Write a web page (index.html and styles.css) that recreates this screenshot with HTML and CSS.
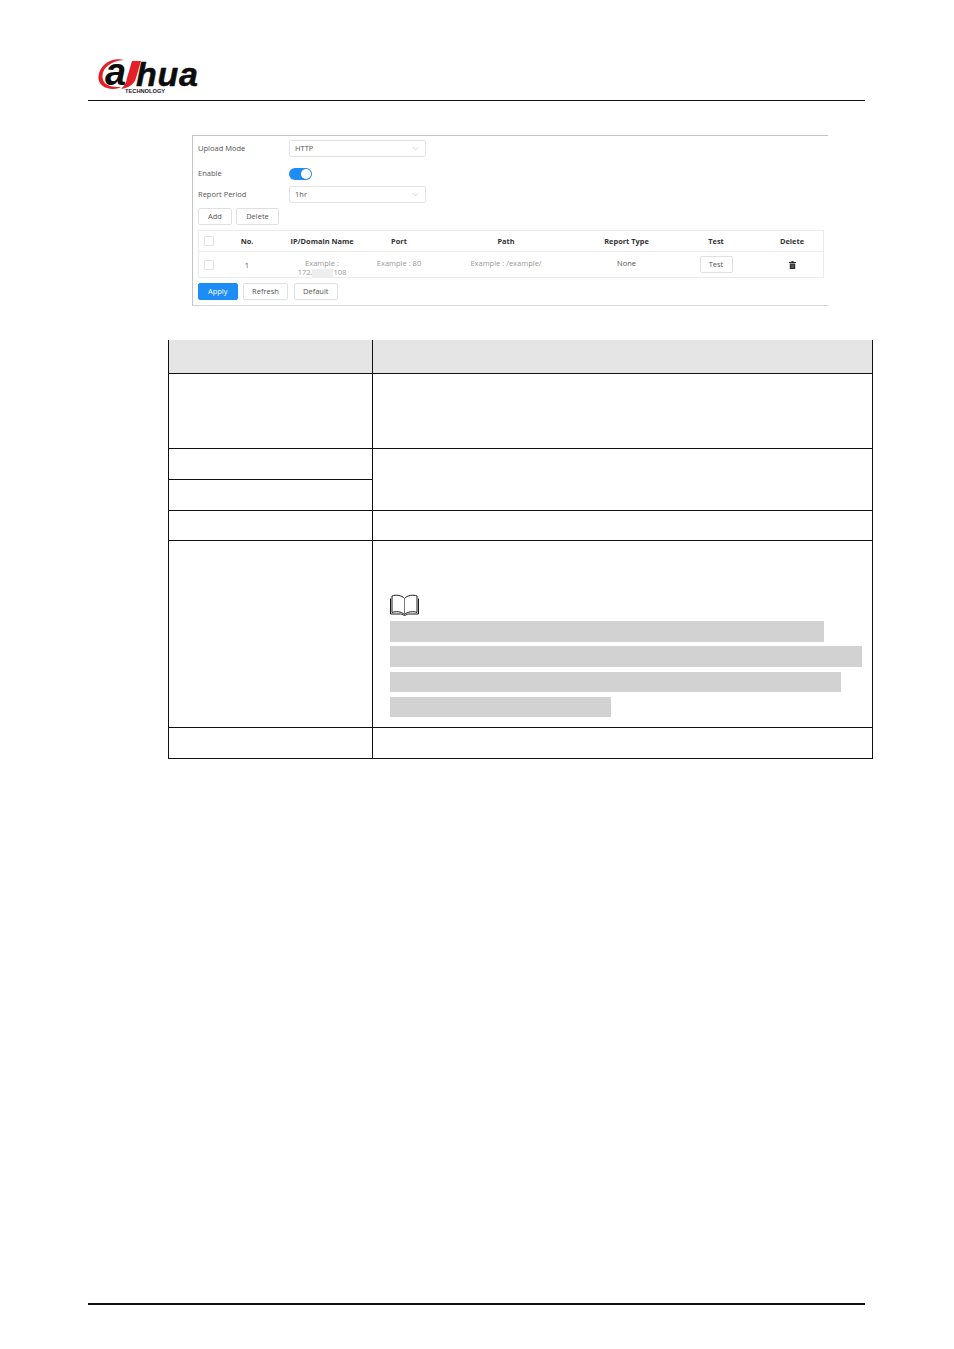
FILE: index.html
```html
<!DOCTYPE html>
<html lang="en">
<head>
<meta charset="utf-8">
<title>Upload</title>
<link rel="stylesheet" href="styles.css">
</head>
<body>
<div class="page">
  <header class="head">
    <div class="logo">
      <svg class="logo-mark" width="62" height="38" viewBox="0 0 62 38">
        <path d="M27 2C14-1 3 7 1.500 18 .5 26 7 31 16 31c3 0 6-1 8-2-6 0-18 0-18.500-10C5 9 15 3 27 2Z" fill="#e3202a"/>
        <path d="M35 3h9l-5 17c-2 7-8 10-15 11 3-3 5-5 6-11Z" fill="#e3202a"/>
      </svg>
      <span class="logo-a">a</span>
      <span class="logo-hua">hua</span>
      <span class="logo-sub">TECHNOLOGY</span>
    </div>
  </header>

  <section class="shot">
    <div class="form-row row-mode">
      <span class="label">Upload Mode</span>
      <div class="select"><span class="sel-text">HTTP</span><svg class="chev" width="7" height="5" viewBox="0 0 8 5"><path d="M1 1l3 3 3-3" fill="none" stroke="#c4c8cc" stroke-width=".8"/></svg></div>
    </div>
    <div class="form-row row-enable">
      <span class="label">Enable</span>
      <div class="switch"><span class="knob"></span></div>
    </div>
    <div class="form-row row-period">
      <span class="label">Report Period</span>
      <div class="select"><span class="sel-text">1hr</span><svg class="chev" width="7" height="5" viewBox="0 0 8 5"><path d="M1 1l3 3 3-3" fill="none" stroke="#c4c8cc" stroke-width=".8"/></svg></div>
    </div>
    <div class="btns top-btns">
      <span class="btn b-add">Add</span>
      <span class="btn b-del">Delete</span>
    </div>
    <div class="grid">
      <div class="grid-row grid-head">
        <div class="c c-check"><span class="box"></span></div>
        <div class="c c-no">No.</div>
        <div class="c c-ip">IP/Domain Name</div>
        <div class="c c-port">Port</div>
        <div class="c c-path">Path</div>
        <div class="c c-type">Report Type</div>
        <div class="c c-test">Test</div>
        <div class="c c-delete">Delete</div>
      </div>
      <div class="grid-row grid-body">
        <div class="c c-check"><span class="box"></span></div>
        <div class="c c-no dark">1</div>
        <div class="c c-ip ph ip-stack"><span>Example :</span><span class="ip-line">172.<i class="blur"></i>108</span></div>
        <div class="c c-port ph raised">Example : 80</div>
        <div class="c c-path ph raised">Example : /example/</div>
        <div class="c c-type dark raised">None</div>
        <div class="c c-test"><span class="btn b-test">Test</span></div>
        <div class="c c-delete">
          <svg width="7" height="8" viewBox="0 0 7 8"><path d="M2.500 0h2v1H7v1H0V1h2.500ZM.8 2.600h5.400V8H.8Z" fill="#2b2b2b"/><path d="M2.300 3.500v3.500M3.500 3.500v3.500M4.700 3.500v3.500" stroke="#999" stroke-width=".4"/></svg>
        </div>
      </div>
    </div>
    <div class="btns bottom-btns">
      <span class="btn b-apply">Apply</span>
      <span class="btn b-refresh">Refresh</span>
      <span class="btn b-default">Default</span>
    </div>
  </section>

  <table class="params">
    <colgroup><col class="col-a"><col class="col-b"></colgroup>
    <tr class="r-head"><th></th><th></th></tr>
    <tr class="r1"><td></td><td></td></tr>
    <tr class="r2"><td></td><td rowspan="2"></td></tr>
    <tr class="r3"><td></td></tr>
    <tr class="r4"><td></td><td></td></tr>
    <tr class="r5">
      <td></td>
      <td class="note-cell">
        <svg class="book" width="29" height="23" viewBox="0.5 1 29 23">
          <path d="M15 5.500C12 2 6 1.500 2.500 3v16.500C6 18 12 18.500 15 21.500c3-3 9-3.500 12.500-2V3C24 1.500 18 2 15 5.500Z" fill="#fff" stroke="#1a1a1a" stroke-width="1"/>
          <path d="M15 5.500v16" stroke="#777" stroke-width="1"/>
          <path d="M1 5.500v15.500h10c2 0 3 1.500 4 1.500s2-1.500 4-1.500h10V5.500" fill="none" stroke="#1a1a1a" stroke-width="1"/>
        </svg>
        <div class="bar bar1"></div>
        <div class="bar bar2"></div>
        <div class="bar bar3"></div>
        <div class="bar bar4"></div>
      </td>
    </tr>
    <tr class="r6"><td></td><td></td></tr>
  </table>

  <footer class="foot"></footer>
</div>
</body>
</html>
```
FILE: styles.css
```css
html, body { margin: 0; padding: 0; background: #fff; }
body { font-family: "Open Sans", "Liberation Sans", sans-serif; }
.page { width: 954px; height: 1349px; position: relative; overflow: hidden; }

.head { margin: 0 89px 0 88px; height: 100px; border-bottom: 1px solid #111; position: relative; }
.logo { position: absolute; left: 9px; top: 58px; width: 104px; height: 38px; }
.logo-mark { position: absolute; left: 0; top: 0; }
.logo-a { position: absolute; left: 8px; top: 4px; font: italic 700 38px/20px "Liberation Sans", sans-serif; color: #0c0c0c; }
.logo-hua { position: absolute; left: 39px; top: 4px; font: italic 700 34px/24px "Liberation Sans", sans-serif; letter-spacing: .7px; color: #0c0c0c; -webkit-text-stroke: .5px #0c0c0c; }
.logo-sub { position: absolute; left: 28px; top: 30px; font: 700 5.700px/6px "Liberation Sans", sans-serif; color: #222; white-space: nowrap; }

.shot { margin: 34px 0 0 192px; width: 635px; height: 169px; border: 1px solid #c4c4c4; border-right: 0; border-bottom-color: #d4d4d4; font-size: 8px; color: #555; box-sizing: content-box; }
.form-row { display: flex; align-items: center; padding-left: 5px; }
.label { width: 91px; font-size: 7.500px; color: #555; padding-bottom: 2px; }
.row-mode { margin-top: 4px; height: 17px; }
.row-enable { margin-top: 11px; height: 12px; }
.row-period { margin-top: 6px; height: 17px; }
.select { width: 124px; height: 15px; border: 1px solid #e2e4e8; border-radius: 2px; display: flex; align-items: center; justify-content: space-between; padding: 0 6px 0 5px; font-size: 7.500px; color: #555; }
.sel-text { padding-bottom: 2px; }
.switch { width: 23px; height: 12px; border-radius: 6px; background: #1e8cf5; position: relative; }
.knob { position: absolute; right: 1px; top: 1px; width: 10px; height: 10px; border-radius: 50%; background: #fff; }

.btns { display: flex; padding-left: 5px; }
.btn { display: flex; align-items: center; justify-content: center; box-sizing: border-box; height: 17px; padding-bottom: 1px; border: 1px solid #e0e0e0; border-radius: 2px; font-size: 7.500px; color: #555; background: #fff; }
.top-btns { margin-top: 5px; gap: 4px; }
.b-add { width: 34px; }
.b-del { width: 43px; }
.bottom-btns { margin-top: 5px; gap: 5.500px; }
.b-apply { width: 39.500px; background: #1e8cf5; border-color: #1e8cf5; color: #fff; }
.b-refresh { width: 45px; }
.b-default { width: 44.500px; }
.b-test { width: 33px; }

.grid { margin: 5px 0 0 5px; width: 626px; border: 1px solid #ececec; box-sizing: border-box; height: 48px; overflow: hidden; }
.grid-row { display: flex; align-items: center; }
.grid-head { height: 20px; border-bottom: 1px solid #ececec; font-weight: 700; font-size: 7.400px; color: #333; }
.grid-body { height: 25px; font-size: 7.500px; }
.c { text-align: center; display: flex; justify-content: center; align-items: center; }
.c-check { width: 20px; }
.c-no { width: 56px; }
.c-ip { width: 94px; }
.c-port { width: 60px; }
.c-path { width: 154px; }
.c-type { width: 87px; }
.c-test { width: 92px; }
.c-delete { width: 60px; }
.box { width: 8px; height: 8px; border: 1px solid #e4e4e4; border-radius: 1px; display: block; }
.ph { color: #999; }
.dark { color: #555; }
.raised { padding-bottom: 3px; }
.ip-stack { flex-direction: column; line-height: 9px; padding-top: 7px; }
.ip-line { display: flex; align-items: center; }
.blur { display: inline-block; width: 21px; height: 8px; background: #eee; }

.params { position: absolute; left: 168px; top: 340px; width: 705px; border-collapse: collapse; table-layout: fixed; }
.col-a { width: 204px; }
.params td, .params th { border: 1px solid #111; padding: 0; vertical-align: top; }
.params .r-head th { background: #e5e5e5; border-top: 0; height: 33px; }
.r1 td { height: 74px; }
.r2 td { height: 30px; }
.r3 td { height: 30px; }
.r4 td { height: 29px; }
.r5 td { height: 133px; }
.r6 td { height: 30px; }
.params .note-cell { padding: 53px 10px 0 17px; }
.book { display: block; margin-bottom: 4px; }
.bar { height: 20.500px; background: #d2d2d2; margin-bottom: 4.830px; }
.bar1 { width: 434px; }
.bar2 { width: 472px; }
.bar3 { width: 451px; }
.bar4 { width: 221px; }

.foot { position: absolute; left: 88px; top: 1303px; width: 777px; height: 2px; background: #111; }
```
